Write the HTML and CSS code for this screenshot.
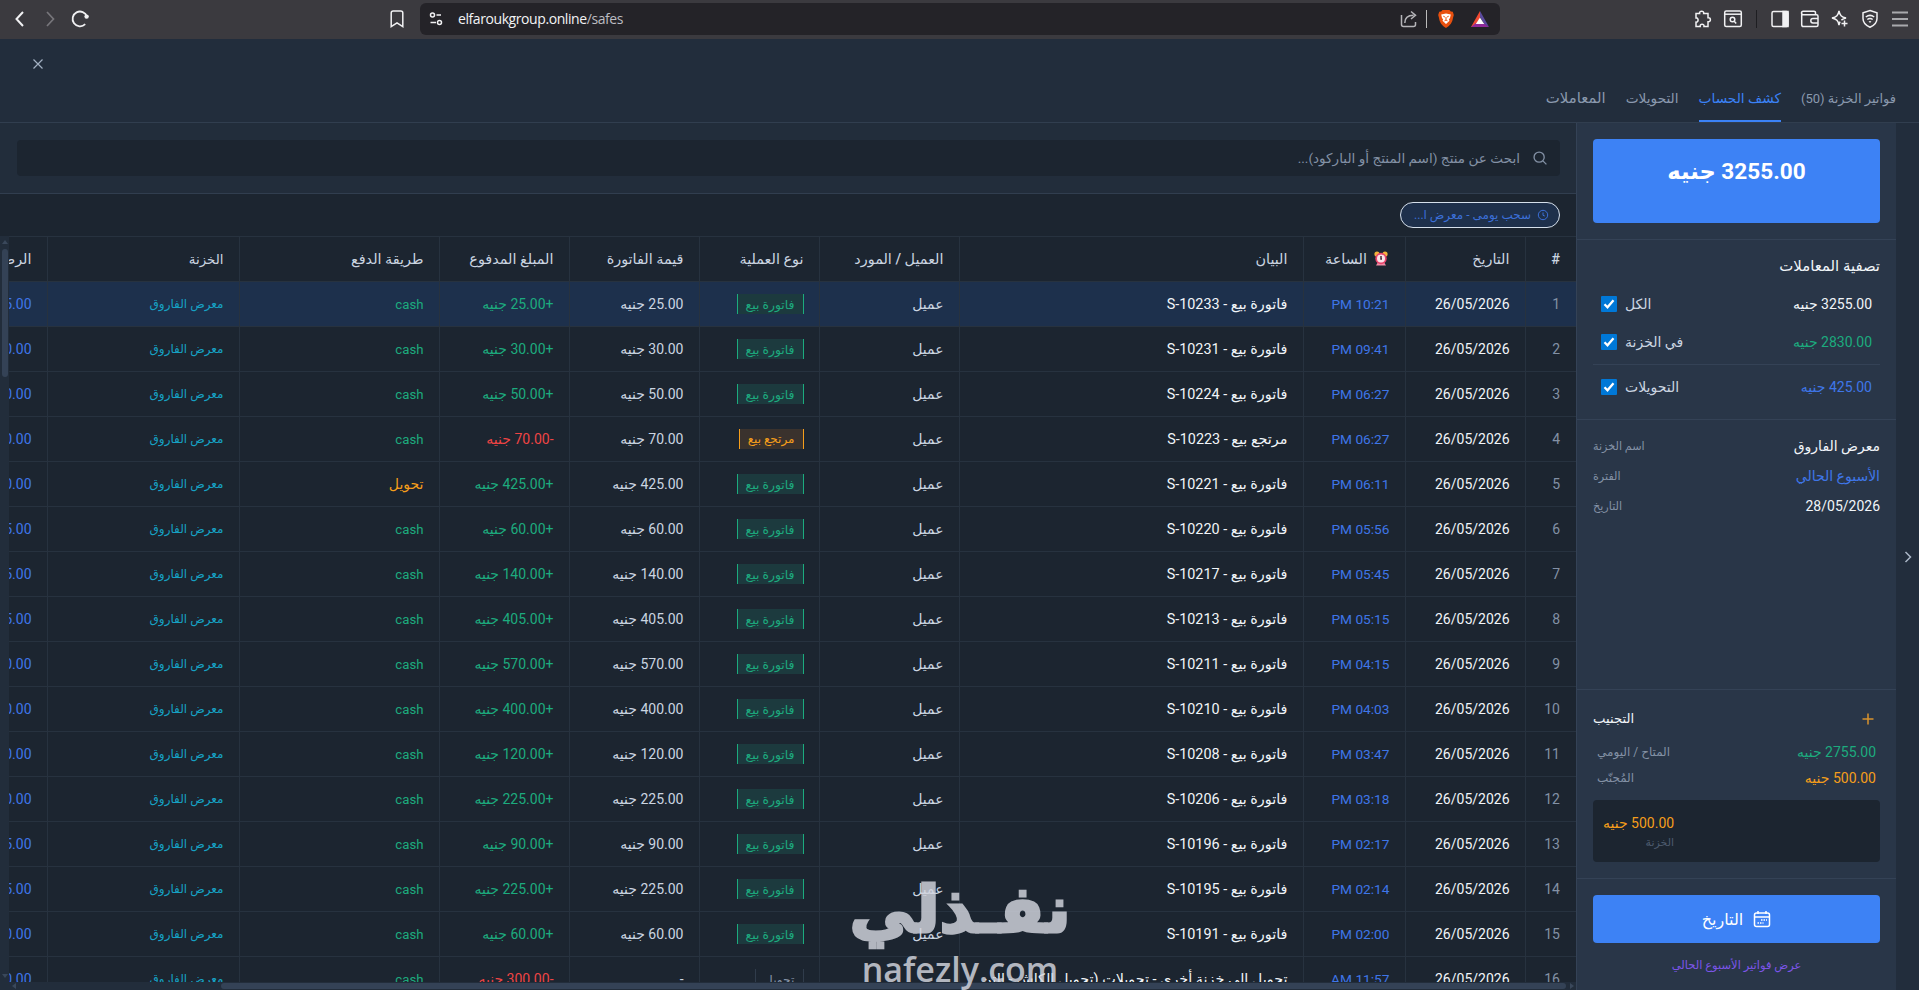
FILE: index.html
```html
<!DOCTYPE html>
<html lang="ar">
<head>
  <meta charset="UTF-8" />
  <title>كشف الحساب</title>
  <link rel="stylesheet" href="styles.css">
</head>
<body>
  <div class="toolbar">
    <div class="tool"><svg width="20" height="20" viewBox="0 0 20 20"><path d="M13 3L6.5 10L13 17" stroke-width="2"/></svg></div>
    <div class="tool dim"><svg width="20" height="20" viewBox="0 0 20 20"><path d="M7 3L13.5 10L7 17" stroke-width="1.7"/></svg></div>
    <div class="tool"><svg width="20" height="20" viewBox="0 0 20 20"><path d="M17 7.5A7.4 7.4 0 1 0 15.2 15.2" stroke-width="1.8"/><circle cx="16.6" cy="7.6" r="2.2" fill="#f1f1f3" stroke="none"/></svg></div>
    <div class="tool bookmark"><svg width="20" height="20" viewBox="0 0 20 20"><path d="M4.2 4a2 2 0 0 1 2-2h7.600a2 2 0 0 1 2 2v13.600L10 13.800L4.200 17.600z"/></svg></div>
    <div class="url-bar">
      <svg width="16" height="16" viewBox="0 0 16 16"><circle cx="4.500" cy="4" r="2"/><path d="M8.500 4H13M2.500 11.500H8"/><circle cx="11.500" cy="11.500" r="2"/></svg>
      <span class="url">elfaroukgroup.online<span>/safes</span></span>
      <div class="url-tools">
        <svg width="18" height="18" viewBox="0 0 18 18"><path d="M1.500 5v9.500a2 2 0 0 0 2 2h10a2 2 0 0 0 2-2V12M4.800 13c0-5 3-7.800 8.700-7.800M11 1.500l4.500 3.700L11 9" stroke="#b5b5b9"/></svg>
        <i class="sep"></i>
        <svg class="brave" width="18" height="20" viewBox="0 0 18 20"><path d="M5.500 1h7l1.300 1.500 2 .2 1 3.300-.7 2.600c-.8 5-2.800 8-7.100 10.400C4.700 16.600 2.700 13.600 1.900 8.600L1.200 6l1-3.300 2-.2z" fill="#e8500f" stroke="none"/><path d="M4.200 5.500L9 4.500l4.800 1-.8 3.400-1.200 1.500.7 1.300L9 14.900 5.500 11.700l.7-1.300L5 8.900z" fill="#fff" stroke="none"/><path d="M6.300 7.200l1.600.8M11.700 7.200l-1.600.8M9 8v2.800M7.500 11.800L9 11l1.500.8" stroke="#e8500f" stroke-width="1"/></svg>
        <svg class="bat" width="18" height="17" viewBox="0 0 18 17"><path d="M9 0L0 16h4l5-9z" fill="#f04a33" stroke="none"/><path d="M0 16h18l-5-4H5z" fill="#8f2a9a" stroke="none"/><path d="M9 0l9 16-5-3.500L9 6z" fill="#5b4a9e" stroke="none"/><path d="M9 6.500L4.800 13h8.400z" fill="#fff" stroke="none"/></svg>
      </div>
    </div>
    <div class="tools-end">
      <div class="tool"><svg width="20" height="20" viewBox="0 0 20 20"><path d="M3 4.500h3.600c-.7-3 4.800-3 4.100 0H15v4.200c3.200-.6 3.200 4.600 0 4.100V17.500h-4c.6-3-4.400-3-3.800 0H3v-4.300c2.800.3 2.800-4.700 0-4.300z"/></svg></div>
      <div class="tool"><svg width="20" height="20" viewBox="0 0 20 20"><rect x="1.700" y="2" width="16.600" height="15.500" rx="1.500"/><path d="M2 5.200H18"/><circle cx="9.500" cy="10.500" r="2.300"/><path d="M11.200 12.300l2 2.200"/></svg></div>
      <i class="sep dark"></i>
      <div class="tool"><svg width="20" height="20" viewBox="0 0 20 20"><rect x="2" y="2.500" width="16" height="15" rx="1.500"/><path d="M13 2.500h5v15h-5z" fill="#f1f1f3"/></svg></div>
      <div class="tool"><svg width="20" height="20" viewBox="0 0 20 20"><path d="M15.500 6V3.700a1.500 1.500 0 0 0-1.500-1.500H3.300a1.700 1.700 0 0 0 0 3.600H16.500a1.500 1.500 0 0 1 1.500 1.500v8.700a1.500 1.500 0 0 1-1.500 1.500H3.500A1.800 1.800 0 0 1 1.700 15.700V4M18 9.500h-5a2.200 2.200 0 0 0 0 4.400h5"/></svg></div>
      <div class="tool"><svg width="20" height="20" viewBox="0 0 20 20"><path d="M9 1.800c.8 4.500 2.400 6.100 7 7.200-2 .5-3.500 1.200-4.600 2.100M9 1.800C8.200 6.300 6.600 7.900 2 9c4.600 1.100 6.200 2.700 7 7.200.2-1.400.6-2.500 1.100-3.500M14.500 11.500v6M11.500 14.500h6"/></svg></div>
      <div class="tool"><svg width="20" height="20" viewBox="0 0 20 20"><path d="M10 1.500l7 2.300v5.700c0 4-2.500 6.800-7 8.700-4.500-1.900-7-4.700-7-8.700V3.800z"/><path d="M5.800 8c2.600-2 5.800-2 8.400 0M7.300 10.500c1.700-1.200 3.700-1.200 5.400 0M9 13c.6-.4 1.400-.4 2 0"/></svg></div>
      <div class="tool"><svg width="20" height="20" viewBox="0 0 20 20"><path d="M2 3.500H18M2 10H18M2 16.500H18" stroke="#a9a9ad" stroke-width="2"/></svg></div>
    </div>
  </div>

  <header class="page-header">
    <button class="close"><svg width="12" height="12" viewBox="0 0 12 12"><path d="M1.500 1.500l9 9M10.500 1.500l-9 9"/></svg></button>
    <nav class="tabs" dir="rtl">
      <a class="tab invoices">فواتير الخزنة (50)</a>
      <a class="tab active">كشف الحساب</a>
      <a class="tab">التحويلات</a>
      <a class="tab last">المعاملات</a>
    </nav>
  </header>

  <div class="layout">
    <main class="content" dir="rtl">
      <div class="search-bar">
        <div class="search">
          <svg width="14" height="14" viewBox="0 0 16 16"><circle cx="7" cy="7" r="5.800"/><path d="M11.300 11.300l4 4"/></svg>
          <span>ابحث عن منتج (اسم المنتج أو الباركود)...</span>
        </div>
      </div>
      <div class="chips">
        <div class="chip">
          <svg width="12" height="12" viewBox="0 0 12 12"><circle cx="6" cy="6" r="4.700"/><path d="M6 3.500V6.300L7.800 7"/></svg>
          <span>سحب يومى - معرض ا...</span>
        </div>
      </div>
      <div class="table-wrap">
        <table>
          <colgroup>
            <col class="c-num"><col class="c-date"><col class="c-time"><col class="c-desc"><col class="c-client"><col class="c-type"><col class="c-value"><col class="c-paid"><col class="c-method"><col class="c-safe"><col class="c-balance">
          </colgroup>
          <thead>
            <tr>
              <th>#</th>
              <th>التاريخ</th>
              <th><svg class="alarm" width="14" height="15" viewBox="0 0 14 15"><circle cx="3" cy="3" r="2.600" fill="#f4b23c"/><circle cx="11" cy="3" r="2.600" fill="#f4b23c"/><path d="M2 14.500l1.500-2.500h7l1.500 2.500z" fill="#f08ca4"/><circle cx="7" cy="7.500" r="5.700" fill="#e8436b"/><circle cx="7" cy="7.500" r="4" fill="#fbe3ea"/><path d="M7 5v3h1" stroke="#46303a" fill="none"/></svg> الساعة</th>
              <th>البيان</th>
              <th>العميل / المورد</th>
              <th>نوع العملية</th>
              <th>قيمة الفاتورة</th>
              <th>المبلغ المدفوع</th>
              <th>طريقة الدفع</th>
              <th class="safe-head">الخزنة</th>
              <th>الرصيد</th>
            </tr>
          </thead>
          <tbody id="rows"></tbody>
        </table>
        <div class="v-scroll"><i class="arrow up"></i><i class="thumb"></i><i class="arrow down"></i></div>
      </div>
      <div class="h-scroll" dir="ltr"><i class="arrow left"></i><i class="thumb"></i><i class="arrow right"></i></div>
    </main>

    <aside class="sidebar">
      <section class="total-box">
        <div class="total" dir="rtl">3255.00 جنيه</div>
      </section>
      <section class="filters">
        <h3 dir="rtl">تصفية المعاملات</h3>
        <label class="filter"><i class="check"><svg width="16" height="16" viewBox="0 0 16 16"><path d="M3.500 8.300l3 3 6-7"/></svg></i><span>الكل</span><b class="white" dir="rtl">3255.00 جنيه</b></label>
        <label class="filter"><i class="check"><svg width="16" height="16" viewBox="0 0 16 16"><path d="M3.500 8.300l3 3 6-7"/></svg></i><span>في الخزنة</span><b class="green" dir="rtl">2830.00 جنيه</b></label>
        <label class="filter split"><i class="check"><svg width="16" height="16" viewBox="0 0 16 16"><path d="M3.500 8.300l3 3 6-7"/></svg></i><span>التحويلات</span><b class="blue" dir="rtl">425.00 جنيه</b></label>
      </section>
      <section class="info">
        <div class="info-row"><span>اسم الخزنة</span><b class="white">معرض الفاروق</b></div>
        <div class="info-row"><span>الفترة</span><b class="blue">الأسبوع الحالي</b></div>
        <div class="info-row"><span>التاريخ</span><b class="white">28/05/2026</b></div>
      </section>
      <section class="reserve">
        <div class="reserve-head"><h3>التجنيب</h3><svg width="12" height="12" viewBox="0 0 12 12"><path d="M6 .5v11M.5 6h11"/></svg></div>
        <div class="reserve-row"><span dir="rtl">المتاح / اليومي</span><b class="green" dir="rtl">2755.00 جنيه</b></div>
        <div class="reserve-row"><span>المُجنّب</span><b class="orange" dir="rtl">500.00 جنيه</b></div>
        <div class="reserve-card"><div dir="rtl"><b class="orange">500.00 جنيه</b><small>الخزنة</small></div></div>
      </section>
      <section class="actions">
        <button class="date-btn" dir="rtl">
          <svg width="18" height="18" viewBox="0 0 18 18"><rect x="1.500" y="3" width="15" height="13.500" rx="2"/><path d="M1.500 7h15M5 1v3M13 1v3"/><path d="M8 10h6M4.500 13h6" stroke-dasharray="1.500 1"/></svg>
          <span>التاريخ</span>
        </button>
        <a class="week-link">عرض فواتير الأسبوع الحالي</a>
      </section>
    </aside>

    <div class="rail"><svg width="10" height="14" viewBox="0 0 10 14"><path d="M2.500 2l5 5-5 5"/></svg></div>
  </div>

  <div class="watermark">
    <div class="wm-ar" dir="rtl">نفـذلي</div>
    <div class="wm-en">nafezly.com</div>
  </div>

  <script>
    // time, invoice no, amount, visible end of the balance
    const rows = [
      ['10:21 PM', '10233', '25.00', 5],
      ['09:41 PM', '10231', '30.00', 0],
      ['06:27 PM', '10224', '50.00', 0],
      ['06:27 PM', '10223', '70.00', 0, 'return'],
      ['06:11 PM', '10221', '425.00', 0, 'transfer'],
      ['05:56 PM', '10220', '60.00', 5],
      ['05:45 PM', '10217', '140.00', 5],
      ['05:15 PM', '10213', '405.00', 5],
      ['04:15 PM', '10211', '570.00', 0],
      ['04:03 PM', '10210', '400.00', 0],
      ['03:47 PM', '10208', '120.00', 0],
      ['03:18 PM', '10206', '225.00', 0],
      ['02:17 PM', '10196', '90.00', 5],
      ['02:14 PM', '10195', '225.00', 5],
      ['02:00 PM', '10191', '60.00', 0],
      ['11:57 AM', '', '300.00', 0, 'out']
    ];

    document.getElementById('rows').innerHTML = rows.map(([time, no, amount, end, kind], i) => {
      const back = kind === 'return';
      const out = kind === 'out';
      const type = out ? 'تحويل' : back ? 'مرتجع بيع' : 'فاتورة بيع';
      const desc = out ? 'تحويل إلى خزنة أخرى - تحويلات (تحويل الكاش - التن' : `${type} - S-${no}`;
      return `<tr>
        <td class="num">${i + 1}</td>
        <td class="strong">26/05/2026</td>
        <td class="blue time">${time}</td>
        <td class="strong desc">${desc}</td>
        <td>${out ? '' : 'عميل'}</td>
        <td><span class="badge ${kind || ''}">${type}</span></td>
        <td>${out ? '-' : amount + ' جنيه'}</td>
        <td class="${back || out ? 'red' : 'green'}">${back || out ? '-' : '+'}${amount} جنيه</td>
        <td class="${kind === 'transfer' ? 'orange' : 'green cash'}">${kind === 'transfer' ? 'تحويل' : 'cash'}</td>
        <td class="safe">معرض الفاروق</td>
        <td class="blue">325${end}.00</td>
      </tr>`;
    }).join('');
  </script>
</body>
</html>
```
FILE: styles.css
```css
* {
  box-sizing: border-box;
}
body {
  margin: 0;
  height: 990px;
  overflow: hidden;
  background: #222d3c;
  color: #cbd5e1;
  font-family: Roboto, "DejaVu Sans", sans-serif;
  font-size: 14px;
  display: flex;
  flex-direction: column;
}
svg {
  fill: none;
  stroke: currentColor;
  stroke-width: 1.5;
  flex: none;
}
h3, th {
  font-weight: 500;
}
b {
  font-weight: 400;
}
i {
  display: block;
}

/* browser bar */
.toolbar {
  height: 39px;
  flex: none;
  background: #3b3a3f;
  color: #f1f1f3;
  display: flex;
  align-items: center;
  padding: 0 4px 1px 5px;
}
.tool {
  width: 30px;
  display: flex;
  justify-content: center;
}
.tool.dim {
  color: #77767b;
}
.bookmark {
  margin-left: 287px;
}
.url-bar {
  width: 1080px;
  height: 32px;
  margin-left: 8px;
  background: #242328;
  border-radius: 6px;
  display: flex;
  align-items: center;
  padding: 0 11px 0 8px;
}
.url {
  font-family: "Open Sans", sans-serif;
  font-size: 14px;
  letter-spacing: -0.42px;
  margin: 0 0 2px 14px;
  color: #f3f3f5;
}
.url span {
  color: #bcbcc2;
}
.url-tools {
  margin-left: auto;
  display: flex;
  align-items: center;
}
.sep {
  width: 1px;
  height: 18px;
  margin: 0 8px;
  background: #bbb;
}
.sep.dark {
  background: #1e1e22;
}
.brave {
  margin-left: 2px;
}
.bat {
  margin-left: 16px;
}
.tools-end {
  margin-left: auto;
  display: flex;
  align-items: center;
}

/* page header */
.page-header {
  height: 84px;
  flex: none;
  border-bottom: 1px solid #313e4f;
  display: flex;
  justify-content: space-between;
  padding: 0 23px 0 32px;
}
.close {
  border: 0;
  padding: 0;
  background: none;
  color: #a3b0c2;
  height: 52px;
}
.close svg {
  stroke-width: 1.2;
}
.tabs {
  display: flex;
  align-items: flex-end;
  gap: 20px;
}
.tab {
  height: 48px;
  line-height: 49px;
  font-size: 13.7px;
  color: #8a99ae;
  border-bottom: 2px solid transparent;
  white-space: nowrap;
}
.tab.invoices {
  font-size: 13px;
}
.tab.last {
  font-size: 14.9px;
}
.tab.active {
  color: #3b82f6;
  border-color: #3b82f6;
}

.layout {
  flex: 1;
  min-height: 0;
  display: flex;
}
.content {
  width: 1576px;
  flex: none;
  display: flex;
  flex-direction: column;
  background: #1c2530;
}
.search-bar {
  height: 71px;
  flex: none;
  background: #222d3b;
  border-bottom: 1px solid #313e4f;
  padding: 17px 16px 17px 17px;
}
.search {
  height: 36px;
  background: #1c2530;
  border-radius: 4px;
  display: flex;
  align-items: center;
  gap: 13px;
  padding: 0 13px;
  color: #8391a5;
  font-size: 13.6px;
}
.chips {
  height: 42px;
  flex: none;
  padding: 8px 16px;
}
.chip {
  width: 160px;
  height: 26px;
  border: 1px solid #d5dfeb;
  border-radius: 13px;
  background: #1e304b;
  color: #3b6fd8;
  display: flex;
  align-items: center;
  gap: 6px;
  padding: 0 10px;
  font-size: 12px;
  white-space: nowrap;
}
.chip svg {
  stroke-width: 1;
}

/* statement table */
.table-wrap {
  position: relative;
  flex: 1;
  min-height: 0;
  overflow: hidden;
}
table {
  width: 1629px;
  table-layout: fixed;
  border-collapse: collapse;
}
.c-num { width: 51px; }
.c-date { width: 120px; }
.c-time { width: 102px; }
.c-desc { width: 344px; }
.c-client { width: 140px; }
.c-type { width: 120px; }
.c-value { width: 130px; }
.c-paid { width: 130px; }
.c-method { width: 200px; }
.c-safe { width: 192px; }
.c-balance { width: 100px; }
tr {
  height: 45px;
}
th, td {
  padding: 0 15px;
  text-align: right;
  white-space: nowrap;
  border: 1px solid #27323f;
}
th {
  color: #cbd5e1;
  font-size: 14.4px;
}
th:first-child, td:first-child {
  border-right: 0;
  padding-right: 16px;
}
tbody tr:first-child {
  background: #1d304c;
}
.safe-head {
  font-size: 13.4px;
}
.num {
  color: #8391a5;
}
.strong, .white {
  color: #f1f5f9;
}
.desc {
  font-size: 14.4px;
}
.blue { color: #3f76e8; }
.green { color: #1cab7e; }
.orange { color: #f59e1b; }
.red { color: #ef4444; }
.safe {
  color: #16a2c4;
  font-size: 12px;
}
.time {
  font-size: 13.7px;
}
.cash {
  font-size: 13.2px;
}
.alarm {
  stroke: none;
  vertical-align: -2px;
  margin: 0 2px 0 3px;
}
.badge {
  display: inline-block;
  height: 20px;
  line-height: 21px;
  padding: 0 8px;
  border: solid #1cab7e;
  border-width: 0 1px;
  background: #1c3a3e;
  color: #1cab7e;
  font-size: 12.4px;
}
.badge.return {
  border-color: #f59e1b;
  background: #3a322d;
  color: #f59e1b;
  font-size: 12px;
}
.badge.out {
  border-color: #303c4b;
  background: none;
  color: #8391a5;
}
.v-scroll {
  position: absolute;
  left: 0;
  top: 0;
  width: 9px;
  height: 100%;
  background: #222d3b;
  display: flex;
  flex-direction: column;
  align-items: center;
  padding: 4px 0;
}
.v-scroll .thumb {
  width: 6px;
  height: 128px;
  margin: 5px 0 auto;
  border-radius: 3px;
  background: #344256;
}
.arrow {
  border: 3px solid transparent;
}
.arrow.up { border-top: 0; border-bottom: 4px solid #3a485b; }
.arrow.down { border-bottom: 0; border-top: 4px solid #3a485b; }
.arrow.left { border-left: 0; border-right: 4px solid #3a485b; }
.arrow.right { border-right: 0; border-left: 4px solid #3a485b; }
.h-scroll {
  height: 8px;
  flex: none;
  background: #222d3b;
  display: flex;
  align-items: center;
  padding: 0 2px 0 12px;
}
.h-scroll .thumb {
  width: 1345px;
  height: 6px;
  margin: 0 4px 0 auto;
  border-radius: 3px;
  background: #344256;
}

/* safe details */
.sidebar {
  width: 320px;
  flex: none;
  background: #293648;
  border-left: 1px solid #344256;
  display: flex;
  flex-direction: column;
}
.sidebar section {
  padding: 0 16px;
}
.sidebar section + section {
  border-top: 1px solid #344256;
}
.sidebar b {
  margin-left: auto;
}
h3 {
  margin: 0;
  font-size: 14px;
  color: #f1f5f9;
}
.total-box {
  height: 116px;
  padding-top: 16px !important;
}
.total {
  height: 84px;
  border-radius: 4px;
  background: #3d82f5;
  color: #fff;
  font-size: 22.6px;
  font-weight: 700;
  line-height: 65px;
  text-align: center;
}
.filters {
  height: 180px;
}
.filters h3 {
  font-size: 14.9px;
  line-height: 52px;
  height: 45px;
}
.filter {
  height: 38px;
  display: flex;
  align-items: center;
  gap: 8px;
  padding: 0 8px;
}
.filter.split {
  height: 45px;
  margin-top: 3px;
  border-top: 1px solid #344256;
}
.check {
  width: 16px;
  height: 16px;
  border-radius: 1px;
  background: #0078d7;
  color: #fff;
}
.check svg {
  display: block;
  stroke-width: 2.3;
}
.info {
  height: 270px;
  padding-top: 11px !important;
}
.info-row {
  height: 30px;
  display: flex;
  align-items: center;
}
.info-row span, .reserve-row span {
  font-size: 12px;
  color: #8391a5;
}
.info-row span {
  font-size: 11.2px;
}
.reserve {
  height: 189px;
}
.reserve-head {
  height: 49px;
  padding: 8px 6px 0 0;
  display: flex;
  align-items: center;
  justify-content: space-between;
  color: #d8932c;
}
.reserve-head h3 {
  font-size: 13.2px;
}
.reserve-row {
  height: 26px;
  display: flex;
  align-items: center;
  padding: 0 4px;
}
.reserve-card {
  height: 62px;
  margin-top: 9px;
  border-radius: 4px;
  background: #1c2530;
  display: flex;
  align-items: center;
  padding: 3px 10px 0;
}
.reserve-card b, .reserve-card small {
  display: block;
  line-height: 20px;
}
.reserve-card small {
  font-size: 11px;
  color: #4d5b6e;
}
.actions {
  flex: 1;
  padding-top: 16px !important;
  text-align: center;
}
.date-btn {
  width: 100%;
  height: 48px;
  border: 0;
  border-radius: 4px;
  background: #3d82f5;
  color: #fff;
  font: 500 16px Roboto, "DejaVu Sans", sans-serif;
  display: flex;
  align-items: center;
  justify-content: center;
  gap: 10px;
}
.week-link {
  display: block;
  line-height: 44px;
  font-size: 11.5px;
  color: #7c55e8;
}
.rail {
  flex: 1;
  display: flex;
  align-items: center;
  justify-content: center;
  color: #aab6c6;
}

.watermark {
  position: absolute;
  left: 845px;
  top: 866px;
  width: 230px;
  height: 124px;
  overflow: hidden;
  color: #d4d6df;
  opacity: 0.82;
  text-align: center;
  white-space: nowrap;
}
.wm-ar {
  height: 86px;
  font: bold 65px/88px "DejaVu Sans", sans-serif;
  -webkit-text-stroke: 3px #d4d6df;
}
.wm-en {
  font: 600 34px/34px "Open Sans", sans-serif;
}
```
